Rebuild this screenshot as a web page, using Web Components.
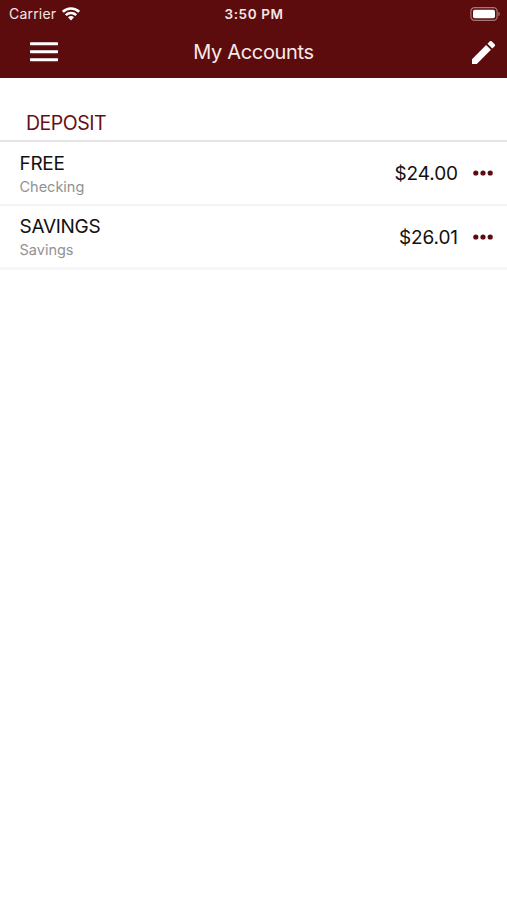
<!DOCTYPE html>
<html lang="en">
<head>
<meta charset="utf-8">
<title>My Accounts</title>
<style>
html, body { margin: 0; background: #fff; }
body { font-family: Inter, "Liberation Sans", sans-serif; color: #111; }
</style>
</head>
<body>
<accounts-screen></accounts-screen>
<script>
const define = (name, html) => customElements.define(name, class extends HTMLElement {
  constructor() {
    super();
    this.attachShadow({ mode: 'open' }).innerHTML = html;
  }
});

define('status-bar', `
<style>
:host { display: grid; grid-template-columns: 1fr auto 1fr; align-items: center; height: 27px; padding: 0 7px 0 9px; box-sizing: border-box; color: #f5e6e4; line-height: 18px; }
.left { display: flex; align-items: center; gap: 6px; font-size: 14px; letter-spacing: .2px; }
.time { font-size: 13.5px; font-weight: 600; letter-spacing: .6px; margin-right: 1px; }
svg { display: block; }
.battery { justify-self: end; }
</style>
<div class="left"><span>Carrier</span>
<svg width="18" height="14" viewBox="0 0 18 14" fill="none" stroke="#fff" stroke-width="2.6"><path d="M.9 4.8C5.4.4 12.6.4 17.1 4.8M3.8 8.1C6.7 5.3 11.3 5.3 14.2 8.1"/><path d="M6 10.2C7.7 8.5 10.3 8.5 12 10.2L9 13.4Z" fill="#fff" stroke="none"/></svg></div>
<span class="time">3:50 PM</span>
<svg class="battery" width="30" height="14" viewBox="0 0 30 14"><rect x=".9" y=".7" width="26.2" height="12.6" rx="3.6" fill="none" stroke="#a77574" stroke-width="1.2"/><rect x="3" y="2.8" width="22" height="8.4" rx="1.8" fill="#fff"/><path d="M28.3 4.8Q29.9 5.5 29.9 7T28.3 9.2Z" fill="#a77574"/></svg>
`);

define('nav-bar', `
<style>
:host { display: grid; grid-template-columns: 1fr auto 1fr; align-items: center; height: 51px; padding: 0 12px 2px; box-sizing: border-box; color: #f8eae7; }
h1 { margin: 0; font-size: 20px; line-height: 24px; font-weight: 400; letter-spacing: -.32px; }
svg { display: block; }
.menu { margin-left: 18px; }
.edit { justify-self: end; margin-top: 1px; }
</style>
<svg class="menu" width="28" height="20" viewBox="0 0 28 20" fill="#fff"><rect y=".3" width="28" height="3" rx=".4"/><rect y="8.2" width="28" height="3" rx=".4"/><rect y="16.2" width="28" height="3" rx=".4"/></svg>
<h1><slot></slot></h1>
<svg class="edit" width="23" height="23" viewBox="3 3 18 18" fill="#fff"><path d="M3 17.25V21h3.75L17.81 9.94l-3.75-3.75L3 17.25zM20.71 7.04a.996.996 0 0 0 0-1.41l-2.34-2.34a.996.996 0 0 0-1.41 0l-1.83 1.83 3.75 3.75 1.83-1.83z"/></svg>
`);

define('section-title', `
<style>
:host { display: block; padding: 33px 26px 5px; color: #671014; font-size: 19.5px; line-height: 24px; letter-spacing: -.5px; border-bottom: 2px solid #e4e4e4; }
</style><slot></slot>
`);

define('account-row', `
<style>
:host { display: flex; align-items: center; height: 64px; box-sizing: border-box; padding: 0 14px 0 19.5px; border-bottom: 2px solid #f3f3f3; }
.info { flex: 1; padding-top: 3px; }
.name { font-size: 19px; line-height: 24px; }
.kind { font-size: 14.5px; line-height: 22px; color: #929292; }
.amount { font-size: 19px; line-height: 24px; letter-spacing: -.1px; margin-right: 15px; padding-top: 2px; }
svg { display: block; }
</style>
<div class="info"><div class="name"><slot name="name"></slot></div><div class="kind"><slot name="kind"></slot></div></div>
<div class="amount"><slot name="amount"></slot></div>
<svg width="20" height="6" viewBox="0 0 20 6" fill="#5d0c10"><circle cx="2.8" cy="3" r="2.6"/><circle cx="10" cy="3" r="2.6"/><circle cx="17.2" cy="3" r="2.6"/></svg>
`);

define('accounts-screen', `
<style>
:host { display: block; height: 900px; background: #fff; overflow: hidden; }
header { background: #5d0c0e; }
span { display: inline-block; }
.caps { letter-spacing: -.3px; }
account-row:last-of-type { border-bottom: 3px solid #f6f6f6; }
</style>
<header><status-bar></status-bar><nav-bar>My Accounts</nav-bar></header>
<section-title>DEPOSIT</section-title>
<account-row><span slot="name" class="caps">FREE</span><span slot="kind">Checking</span><span slot="amount">$24.00</span></account-row>
<account-row><span slot="name" class="caps">SAVINGS</span><span slot="kind">Savings</span><span slot="amount">$26.01</span></account-row>
`);
</script>
</body>
</html>
